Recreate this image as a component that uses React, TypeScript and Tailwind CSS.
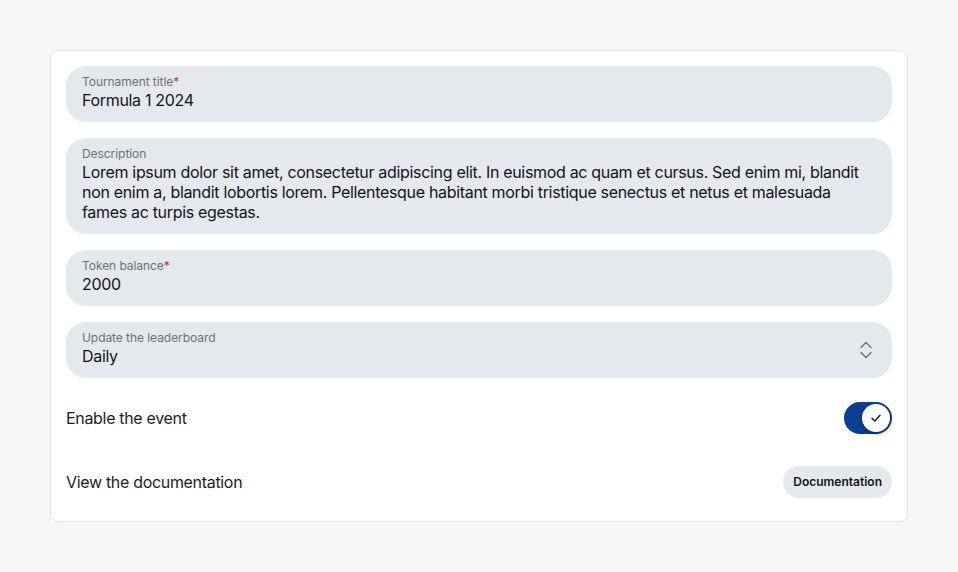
import { useState } from 'react';

function Field({
  label,
  required,
  children,
}: {
  label: string;
  required?: boolean;
  children: React.ReactNode;
}) {
  return (
    <div className="rounded-[20px] bg-[#e5e9ed] px-4 pt-2 pb-3">
      <div className="text-xs leading-4 tracking-[-0.005em] text-[#6b7178]">
        {label}
        {required && <span className="text-[#d32f3a]">*</span>}
      </div>
      <div className="text-base leading-5 tracking-[-0.02em] text-[#111418]">
        {children}
      </div>
    </div>
  );
}

export default function App() {
  const [enabled, setEnabled] = useState(true);

  return (
    <div
      className="min-h-[572px] bg-[#f6f7f9] p-[50px]"
      style={{ fontFamily: 'Inter, "Noto Sans", sans-serif' }}
    >
      <div className="flex flex-col gap-4 rounded-lg border border-[#e2e4e7] bg-white p-[15px]">
        <Field label="Tournament title" required>
          Formula 1 2024
        </Field>

        <Field label="Description">
          Lorem ipsum dolor sit amet, consectetur adipiscing elit. In euismod ac
          quam et cursus. Sed enim mi, blandit non enim a, blandit lobortis
          lorem. Pellentesque habitant morbi tristique senectus et netus et
          malesuada fames ac turpis egestas.
        </Field>

        <Field label="Token balance" required>
          2000
        </Field>

        <div className="flex items-center justify-between rounded-[20px] bg-[#e5e9ed] pl-4 pr-[19px]">
          <div className="pt-2 pb-3">
            <div className="text-xs leading-4 tracking-[-0.005em] text-[#6b7178]">
              Update the leaderboard
            </div>
            <div className="text-base leading-5 tracking-[-0.02em] text-[#111418]">
              Daily
            </div>
          </div>
          <svg
            width="14"
            height="20"
            viewBox="0 0 14 20"
            fill="none"
            stroke="#6b7178"
            strokeWidth="1.4"
            strokeLinecap="round"
            strokeLinejoin="round"
          >
            <path d="M2 7.5 7 2.5l5 5" />
            <path d="M2 12.5l5 5 5-5" />
          </svg>
        </div>

        <div className="flex h-12 items-center justify-between">
          <span className="text-base tracking-[-0.02em] text-[#1b1e22]">
            Enable the event
          </span>
          <button
            onClick={() => setEnabled(!enabled)}
            className="flex h-8 w-12 items-center rounded-full bg-[#0b3d91] p-0.5"
          >
            <span
              className={
                enabled
                  ? 'ml-auto flex h-7 w-7 items-center justify-center rounded-full bg-white shadow-[0_2px_4px_rgba(0,0,0,0.3)]'
                  : 'flex h-7 w-7 items-center justify-center rounded-full bg-white shadow-[0_2px_4px_rgba(0,0,0,0.3)]'
              }
            >
              {enabled && (
                <svg
                  width="12"
                  height="12"
                  viewBox="0 0 12 12"
                  fill="none"
                  stroke="#1b1e22"
                  strokeWidth="1.5"
                  strokeLinecap="round"
                  strokeLinejoin="round"
                >
                  <path d="M2 6.2 4.8 9 10 3.2" />
                </svg>
              )}
            </span>
          </button>
        </div>

        <div className="flex h-12 items-center justify-between">
          <span className="text-base tracking-[-0.02em] text-[#1b1e22]">
            View the documentation
          </span>
          <button className="h-8 rounded-full bg-[#e5e9ed] px-[10px] text-xs font-semibold text-[#111418]">
            Documentation
          </button>
        </div>
      </div>
    </div>
  );
}
